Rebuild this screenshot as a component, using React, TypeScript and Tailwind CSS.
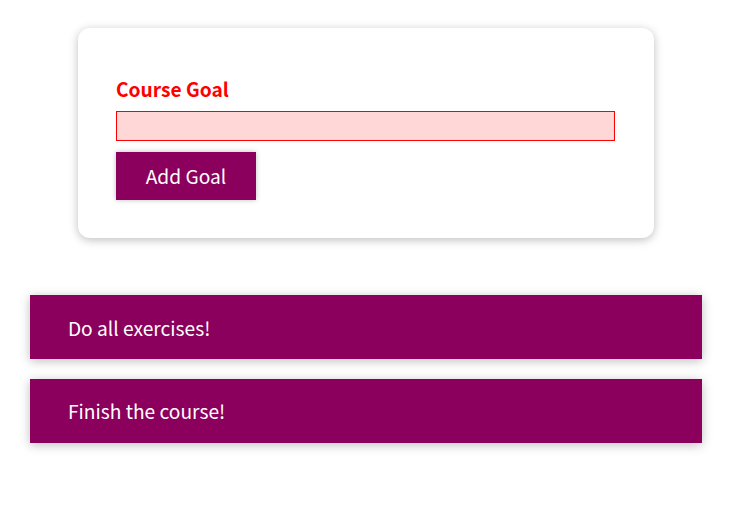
import { useState } from 'react';

const initialGoals = [
  { id: 'g1', text: 'Do all exercises!' },
  { id: 'g2', text: 'Finish the course!' },
];

export default function App() {
  const [goals] = useState(initialGoals);
  const [value, setValue] = useState('');
  const isValid = false;

  return (
    <div className="min-h-[523px] bg-white pt-[28px] text-[19.2px] leading-[1.5] font-['Noto_Sans_CJK_KR','Noto_Sans',sans-serif]">
      <section className="mx-auto w-[576px] rounded-[12px] bg-white p-[38.4px] shadow-[0_2px_10px_rgba(0,0,0,0.26)]">
        <form onSubmit={(e) => e.preventDefault()}>
          <div className="mt-[10.6px] mb-[10.6px]">
            <label className={`mb-[9.6px] block font-bold leading-[24px] ${isValid ? 'text-black' : 'text-[#ff0000]'}`}>
              Course Goal
            </label>
            <input
              type="text"
              value={value}
              onChange={(e) => setValue(e.target.value)}
              className="block w-full border border-[#ff0000] bg-[#ffd7d7] px-[4.8px] leading-[28.8px] outline-none"
            />
          </div>
          <button
            type="submit"
            className="border border-[#8b005d] bg-[#8b005d] px-[28.8px] py-[8.6px] leading-[28.8px] text-white shadow-[0_0_5px_rgba(0,0,0,0.26)]"
          >
            Add Goal
          </button>
        </form>
      </section>
      <section className="mx-auto mt-[57px] w-[672px]">
        <ul className="flex flex-col gap-[19.2px]">
          {goals.map((goal) => (
            <li
              key={goal.id}
              className="h-[64px] bg-[#8b005d] px-[38.4px] pt-[20.6px] pb-[17.8px] leading-[25.6px] text-white shadow-[0_2px_10px_rgba(0,0,0,0.26)]"
            >
              {goal.text}
            </li>
          ))}
        </ul>
      </section>
    </div>
  );
}
